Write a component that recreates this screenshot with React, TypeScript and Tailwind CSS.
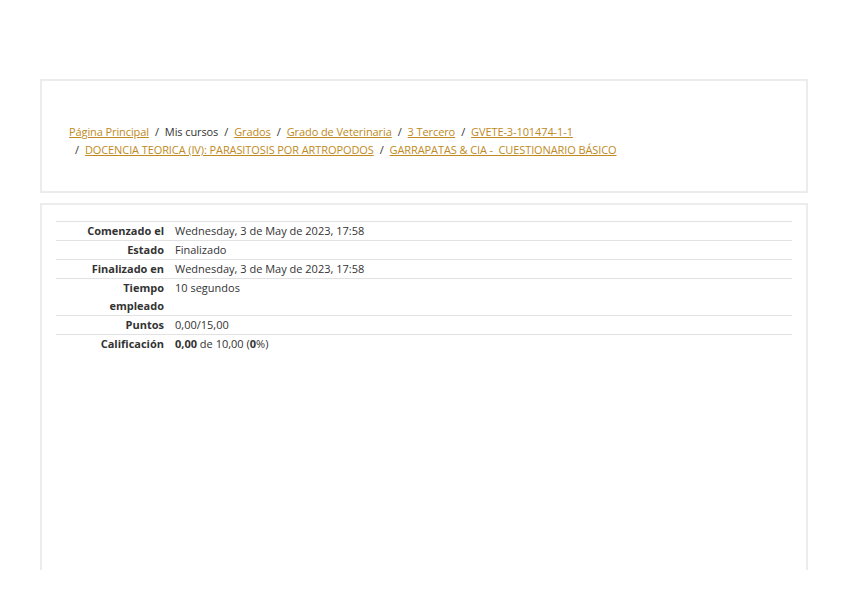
import React from 'react';

const crumbs: { label: string; link: boolean; breakBefore?: boolean }[] = [
  { label: 'Página Principal', link: true },
  { label: 'Mis cursos', link: false },
  { label: 'Grados', link: true },
  { label: 'Grado de Veterinaria', link: true },
  { label: '3 Tercero', link: true },
  { label: 'GVETE-3-101474-1-1', link: true },
  { label: 'DOCENCIA TEORICA (IV): PARASITOSIS POR ARTROPODOS', link: true, breakBefore: true },
  { label: 'GARRAPATAS & CIA -  CUESTIONARIO BÁSICO', link: true },
];

const rows: { label: React.ReactNode; value: React.ReactNode }[] = [
  { label: 'Comenzado el', value: 'Wednesday, 3 de May de 2023, 17:58' },
  { label: 'Estado', value: 'Finalizado' },
  { label: 'Finalizado en', value: 'Wednesday, 3 de May de 2023, 17:58' },
  { label: <>Tiempo<br />empleado</>, value: '10 segundos' },
  { label: 'Puntos', value: '0,00/15,00' },
  {
    label: 'Calificación',
    value: (
      <>
        <b>0,00</b> de 10,00 (<b>0</b>%)
      </>
    ),
  },
];

export default function App() {
  return (
    <div
      className="h-[570px] overflow-hidden bg-white text-[#333] text-[11px] leading-[18px] flex flex-col gap-[10px] px-[40px] pt-[79px]"
      style={{ fontFamily: '"Open Sans", "Noto Sans", sans-serif' }}
    >
      {/* Header / breadcrumb */}
      <div className="border-2 border-[#ececec] h-[114px] px-[27px] pt-[42px] tracking-[-0.1px]">
        <div className="whitespace-pre-wrap">
          {crumbs.map((c, i) => (
            <React.Fragment key={i}>
              {c.breakBefore && <br />}
              {i > 0 && <span className="mx-[6px]">/</span>}
              {c.link ? (
                <a href="#" className="text-[#c08a22] underline">
                  {c.label}
                </a>
              ) : (
                <span>{c.label}</span>
              )}
            </React.Fragment>
          ))}
        </div>
      </div>

      {/* Quiz summary */}
      <div className="flex-1 border-2 border-b-0 border-[#ececec] px-[14px] pt-[16px]">
        <table className="w-full border-collapse">
          <tbody>
            {rows.map((r, i) => (
              <tr key={i} className="border-t border-[#e2e2e2] align-top">
                <th className="w-[113px] pr-[5px] text-right font-bold">{r.label}</th>
                <td className="pl-[6px]">{r.value}</td>
              </tr>
            ))}
          </tbody>
        </table>
      </div>
    </div>
  );
}
